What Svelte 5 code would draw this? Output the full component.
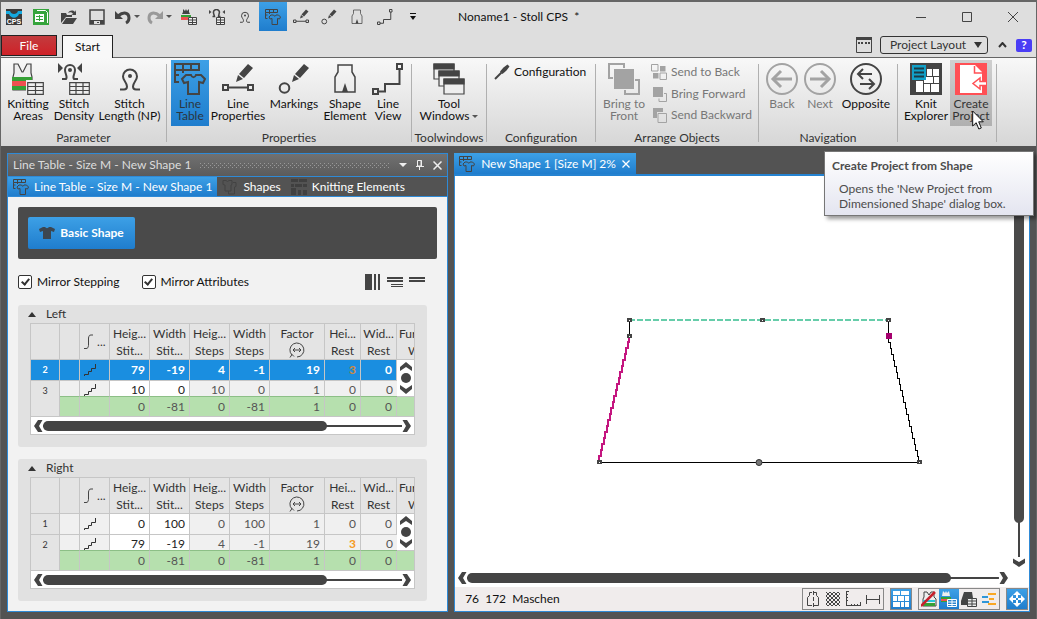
<script lang="ts">
  type Cell = { v: string; tone?: 'edit' | 'warn' };
  interface Row { nr: string; selected?: boolean; cells: Cell[] }
  interface Side { title: string; rows: Row[] }

  const quickTools = ['areas', 'density', 'loop', 'table', 'lineprops', 'marking', 'element', 'lineview'];
  const quickNames = ['Knitting Areas', 'Stitch Density', 'Stitch Length', 'Line Table', 'Line Properties', 'Markings', 'Shape Element', 'Line View'];

  const columns = [
    ['Heig...', 'Stit...'],
    ['Width', 'Stit...'],
    ['Heig...', 'Steps'],
    ['Width', 'Steps'],
    ['Factor', ''],
    ['Hei...', 'Rest'],
    ['Wid...', 'Rest']
  ];

  const totals = ['0', '-81', '0', '-81', '1', '0', '0'];

  function cells(values: string[], warn = false): Cell[] {
    return values.map((v, i) => ({ v, tone: i < 2 ? 'edit' : warn && i === 5 ? 'warn' : undefined }));
  }

  const sides: Side[] = [
    {
      title: 'Left',
      rows: [
        { nr: '2', selected: true, cells: cells(['79', '-19', '4', '-1', '19', '3', '0'], true) },
        { nr: '3', cells: cells(['10', '0', '10', '0', '1', '0', '0']) }
      ]
    },
    {
      title: 'Right',
      rows: [
        { nr: '1', cells: cells(['0', '100', '0', '100', '1', '0', '0']) },
        { nr: '2', cells: cells(['79', '-19', '4', '-1', '19', '3', '0'], true) }
      ]
    }
  ];

  let open = $state([true, true]);
  let mirrorStepping = $state(true);
  let mirrorAttributes = $state(true);

  // one stair per stitch the edge moves sideways
  function stairs(x: number, y: number, dx: number, dy: number, count: number) {
    let d = `M${x} ${y}`;
    for (let i = 1; i <= count; i++) {
      d += `V${Math.round(y + (dy * i) / count)}`;
      if (i < count) d += `H${x + Math.round((dx * i) / (count - 1))}`;
    }
    return d;
  }

  const leftEdge = stairs(174, 160, -30, 126, 21);
  const rightEdge = stairs(433, 160, 30, 126, 21);
</script>

{#snippet icon(name: string, size = 32)}
  <svg class="icon" width={size} height={size} viewBox="0 0 32 32" fill="none" stroke="currentColor" stroke-width={size < 20 ? 2.4 : 1.6} aria-hidden="true">
    {#if name === 'areas'}
      <path d="M1 27V14l1-4V1h4l4 8h1l4-8h4v9l1 4v13z" fill="#eee" stroke-width="1.2" />
      <path d="M0 14h20v13H0z" fill="#35a035" stroke="none" />
      <path d="M0 18h20v5H0z" fill="#f05050" stroke="none" />
      <path d="M14 17h18v15H14z" fill="#eee" stroke="none" />
      <path d="M15.700 19.700h15.600v11.600H15.700zM15.700 23.500h15.600M15.700 27.500h15.600M23.500 19.700v11.600" stroke-width="1.2" />
    {:else if name === 'density'}
      <path d="M0 0v10l5-5zM24 0v10l-5-5z" fill="currentColor" stroke="none" />
      <path d="M4 16h4c2-2-1-5-1-9a5 5 0 0 1 10 0c0 4-3 7-1 9h4" stroke-width="2" />
      <circle cx="12" cy="7" r="2" fill="currentColor" stroke="none" />
      <path d="M11.700 19.700h19.600v11.600H11.700zM11.700 23.500h19.600M11.700 27.500h19.600M18 19.700v11.600M25 19.700v11.600" fill="#eee" stroke-width="1.2" />
    {:else if name === 'loop'}
      <path d="M6 26.500h4c2 0 3-1 3-3 0-4-4-6-4-10a7 7 0 0 1 14 0c0 4-4 6-4 10 0 2 1 3 3 3h4" stroke-width="2" />
      <circle cx="16" cy="13" r="2" fill="currentColor" stroke="none" />
    {:else if name === 'table'}
      <path d="M1 1h24v6H1zM9 1v6M17 1v6M5 12H1v7h4M1 7v5M9 7v3" stroke-width="2" />
      <path d="M12 12h5c1 3 4 3 5 0h5l4 4-2 4-4-1v12H14V19l-4 1-2-4z" stroke-width="2" />
    {:else if name === 'lineprops'}
      <path d="M1 22h5v5H1zM26 22h5v5h-5zM6 24.500h20" stroke-width="2" />
      <path d="M14 19l2-7 5 4zM17 11L26 1l5 4-9 10z" fill="currentColor" stroke="none" />
    {:else if name === 'marking'}
      <circle cx="6.500" cy="25" r="4.800" stroke-width="2" />
      <path d="M14 19l2-7 5 4zM17 11L26 1l5 4-9 10z" fill="currentColor" stroke="none" />
    {:else if name === 'element'}
      <path d="M9 2h14v7l3 5v15H6V14l3-5z" stroke-width="1.500" />
      <path d="M13 29l3-9 3 9z" fill="currentColor" stroke="none" />
    {:else if name === 'lineview'}
      <path d="M1 26h5v5H1zM25 1h5v5h-5zM6 28.500h7V21h14.500V6" stroke-width="2" />
    {:else if name === 'windows'}
      <g fill="#eee" stroke-width="1.200">
        <path d="M1 1h20v15H1z" /><path d="M1 1h20v5H1z" fill="currentColor" />
        <path d="M6 8h20v15H6z" /><path d="M6 8h20v5H6z" fill="currentColor" />
        <path d="M11 16h20v15H11z" /><path d="M11 16h20v5H11z" fill="currentColor" />
      </g>
    {:else if name === 'config'}
      <path d="M2 30L15 17" stroke-width="4" />
      <path d="M12 15l5 5 8-7 6-8-4-4-8 6z" fill="currentColor" stroke="none" />
    {:else if name === 'front'}
      <path d="M6 6h20v20H6z" fill="currentColor" stroke="none" />
      <path d="M5 15H1V1h15v4M27 17h4v14H17v-4" stroke-width="2" />
    {:else if name === 'toback'}
      <path d="M1 1h13v13H1zM18 18h13v13H18z" stroke-width="2" />
      <path d="M18 4h11v11H18zM4 18h11v11H4z" fill="currentColor" stroke="none" />
    {:else if name === 'forward'}
      <path d="M4 2h20v20H4z" fill="currentColor" stroke="none" />
      <path d="M26 15h5v16H16v-6" stroke-width="2" />
    {:else if name === 'backward'}
      <path d="M4 2h20v8H12v12H4z" fill="currentColor" stroke="none" />
      <path d="M14 13h17v18H14z" stroke-width="2" />
    {:else if name === 'back'}
      <circle cx="16" cy="16" r="15" stroke-width="2" />
      <path d="M26 16H8" stroke-width="3" /><path d="M15 8l-8 8 8 8" stroke-width="3" />
    {:else if name === 'next'}
      <circle cx="16" cy="16" r="15" stroke-width="2" />
      <path d="M6 16h18" stroke-width="3" /><path d="M17 8l8 8-8 8" stroke-width="3" />
    {:else if name === 'opposite'}
      <circle cx="16" cy="16" r="15" stroke-width="2" />
      <path d="M22 11H8M13 6l-5 5 5 5M10 21h14M19 16l5 5-5 5" stroke-width="2" />
    {:else if name === 'explorer'}
      <path d="M0 0h32v32H0z" fill="currentColor" stroke="none" />
      <path d="M17 6h5v7h-5zM23 6h6v7h-6zM6 18h7v11H6zM14 14h9v6h-9zM24 14h5v6h-5zM14 21h6v8h-6zM21 21h8v8h-8z" fill="#fff" stroke="none" />
      <path d="M2 2h14v15H2z" fill="#11a0c8" stroke="none" />
      <path d="M4 5.500h10M4 9.500h10M4 13.500h10" stroke="#1c3a44" stroke-width="2" />
    {:else if name === 'create'}
      <path d="M0 0h32v32H0z" fill="#ff5055" stroke="none" />
      <path d="M5 2h15l7 7v21H5z" fill="#fff" stroke="none" />
      <path d="M19.500 3v7H27" stroke="#ff5055" stroke-width="1.500" />
      <path d="M31 18.500h-6V15l-7 5.500 7 5.500v-3.500h6" fill="#fff" stroke="#ff5055" stroke-width="1.500" />
    {/if}
  </svg>
{/snippet}

{#snippet big(name: string, first: string, second: string, width: string, disabled = false)}
  <button type="button" class="big {width}" class:active={name === 'table'} class:hovered={name === 'create'} {disabled}>
    {@render icon(name)}
    <span>{first}<br />{second}{#if name === 'windows'}<i class="caret"></i>{/if}</span>
    {#if name === 'create'}
      <svg class="pointer" width="12" height="20" viewBox="0 0 12 20" aria-hidden="true">
        <path d="M.7 1v15l3.500-3.300 2.600 6.300 2.500-1-2.600-6.200h4.600z" fill="#fff" stroke="#111" />
      </svg>
    {/if}
  </button>
{/snippet}

{#snippet chevron(dir: string)}
  <svg class="chevron {dir}" width="10" height="12" viewBox="0 0 10 12" aria-hidden="true">
    <path d="M5 0h4.500L6 6l3.500 6H5L1 6z" fill="#444" />
  </svg>
{/snippet}

{#snippet hscroll(kind: string)}
  <div class="hscroll {kind}">
    {@render chevron('left')}
    <div class="track"><div class="thumb"></div></div>
    {@render chevron('right')}
  </div>
{/snippet}

<div class="window">
  <header class="titlebar">
    <div class="quick">
      <button type="button" class="app-button" aria-label="CPS">
        <svg width="16" height="16" viewBox="0 0 16 16">
          <path d="M0 0h16v16H0z" fill="#3b3b3b" />
          <path d="M0 2h4c1 4 7 4 8 0h4v3h-3c-2 5-8 5-10 0H0z" fill="#14a9e0" />
          <text x="8" y="15" text-anchor="middle" class="logo-text">CPS</text>
        </svg>
      </button>
      <button type="button" aria-label="New">
        <svg width="16" height="16" viewBox="0 0 16 16">
          <path d="M0 0h16v16H0z" fill="#35a43c" />
          <path d="M4 1.500h8.500l2 2V14" fill="none" stroke="#fff" />
          <path d="M2 5h9v8H2z" fill="#fff" />
          <path d="M3 7.500h7M3 10.500h7M6.500 6v6" stroke="#35a43c" />
        </svg>
      </button>
      <button type="button" aria-label="Open">
        <svg width="16" height="16" viewBox="0 0 16 16" fill="#444">
          <path d="M0 14V4h5l1 2h5v2H5zM5 9h11l-4 6H1z" />
          <path d="M7 4c2-3 5-3 7-1l1-2v5h-5l2-1c-1-2-3-2-5-1z" />
        </svg>
      </button>
      <button type="button" aria-label="Save">
        <svg width="16" height="16" viewBox="0 0 16 16" fill="none" stroke="#444">
          <path d="M1 1h14v14H1z" stroke-width="1.500" /><path d="M1 11h14v4H1z" fill="#444" stroke="none" /><path d="M5 12h6v3H5z" fill="#ddd" stroke="none" /><path d="M8 13h2v1H8z" fill="#444" stroke="none" />
        </svg>
      </button>
      <button type="button" class="split" aria-label="Undo">
        <svg width="16" height="16" viewBox="0 0 16 16" fill="none" stroke="#444" stroke-width="3"><path d="M3 7c6-5 11-3 11 2 0 3-1 4-3 5" /><path d="M0 2v8h8z" fill="#444" stroke="none" /></svg>
        <i class="caret"></i>
      </button>
      <button type="button" class="split" aria-label="Redo">
        <svg width="16" height="16" viewBox="0 0 16 16" fill="none" stroke="#999" stroke-width="3"><path d="M13 7C7 2 2 4 2 9c0 3 1 4 3 5" /><path d="M16 2v8H8z" fill="#999" stroke="none" /></svg>
        <i class="caret"></i>
      </button>
      {#each quickTools as tool, i}
        <button type="button" class:active={tool === 'table'} aria-label={quickNames[i]}>
          {#if tool === 'areas'}
            <svg width="16" height="16" viewBox="0 0 16 16">
              <path d="M1 5l1-2V0l2 2 1-2 1 2 2-2v3l1 2z" fill="#444" />
              <path d="M0 6h10v2H0z" fill="#35a035" /><path d="M0 8h7v3H0z" fill="#f05050" />
              <path d="M7.500 8.500h8v7h-8zM7.500 11h8M7.500 13.500h8M11.500 8.500v7" fill="#eee" stroke="#444" />
            </svg>
          {:else if tool === 'density'}
            <svg width="16" height="16" viewBox="0 0 16 16" fill="none" stroke="#444">
              <path d="M0 1v4l2.500-2zM16 1v4l-2.500-2z" fill="#444" stroke="none" />
              <path d="M3.500 7.500h2L4.500 4a3 3 0 0 1 6-1l-1 4.500h2" stroke-width="1.500" />
              <path d="M7.500 8.500h8v7h-8zM7.500 11h8M7.500 13.500h8M11.500 8.500v7" fill="#eee" />
            </svg>
          {:else}
            {@render icon(tool, 16)}
          {/if}
        </button>
      {/each}
      <button type="button" aria-label="Customize">
        <svg width="8" height="8" viewBox="0 0 8 8"><path d="M1 0h6v1H1zM1 3h6L4 7z" fill="#111" /></svg>
      </button>
    </div>
    <h1>Noname1 - Stoll CPS &nbsp;*</h1>
    <div class="window-buttons">
      <button type="button" aria-label="Minimize"><svg width="10" height="10" viewBox="0 0 10 10"><path d="M0 5.500h10" stroke="#444" /></svg></button>
      <button type="button" aria-label="Maximize"><svg width="10" height="10" viewBox="0 0 10 10"><path d="M.5.5h9v9h-9z" fill="none" stroke="#444" /></svg></button>
      <button type="button" aria-label="Close"><svg width="12" height="12" viewBox="0 0 12 12"><path d="M1 1l10 10M11 1L1 11" stroke="#444" /></svg></button>
    </div>
  </header>

  <nav class="ribbon-tabs">
    <button type="button" class="file">File</button>
    <button type="button" class="start">Start</button>
    <div class="ribbon-tools">
      <svg width="16" height="16" viewBox="0 0 16 16"><path d="M.5.5h15v15H.5z" fill="none" stroke="#444" /><path d="M0 0h16v3H0zM2 5h2v2H2zM5 5h2v2H5zM9 5h2v2H9zM12 5h2v2h-2z" fill="#444" /></svg>
      <select aria-label="Layout"><option>Project Layout</option></select>
      <button type="button" aria-label="Collapse ribbon"><svg width="9" height="6" viewBox="0 0 9 6"><path d="M1 5l3.500-4L8 5" fill="none" stroke="#333" stroke-width="2" /></svg></button>
      <button type="button" class="help" aria-label="Help">?</button>
    </div>
  </nav>

  <section class="ribbon">
    <div class="group">
      <div class="items">
        {@render big('areas', 'Knitting', 'Areas', 'w46')}
        {@render big('density', 'Stitch', 'Density', 'w46')}
        {@render big('loop', 'Stitch', 'Length (NP)', 'w65')}
      </div>
      <h2>Parameter</h2>
    </div>
    <div class="group">
      <div class="items">
        {@render big('table', 'Line', 'Table', 'w38')}
        {@render big('lineprops', 'Line', 'Properties', 'w58')}
        {@render big('marking', 'Markings', '', 'w54')}
        {@render big('element', 'Shape', 'Element', 'w48')}
        {@render big('lineview', 'Line', 'View', 'w38')}
      </div>
      <h2>Properties</h2>
    </div>
    <div class="group">
      <div class="items">{@render big('windows', 'Tool', 'Windows', 'w66')}</div>
      <h2>Toolwindows</h2>
    </div>
    <div class="group">
      <div class="items">
        <div class="stack wide">
          <button type="button">{@render icon('config', 16)}Configuration</button>
        </div>
      </div>
      <h2>Configuration</h2>
    </div>
    <div class="group">
      <div class="items">
        {@render big('front', 'Bring to', 'Front', 'w48', true)}
        <div class="stack">
          <button type="button" disabled>{@render icon('toback', 16)}Send to Back</button>
          <button type="button" disabled>{@render icon('forward', 16)}Bring Forward</button>
          <button type="button" disabled>{@render icon('backward', 16)}Send Backward</button>
        </div>
      </div>
      <h2>Arrange Objects</h2>
    </div>
    <div class="group">
      <div class="items">
        {@render big('back', 'Back', '', 'w38', true)}
        {@render big('next', 'Next', '', 'w38', true)}
        {@render big('opposite', 'Opposite', '', 'w54')}
      </div>
      <h2>Navigation</h2>
    </div>
    <div class="group">
      <div class="items">
        {@render big('explorer', 'Knit', 'Explorer', 'w48')}
        {@render big('create', 'Create', 'Project', 'w42')}
      </div>
    </div>
  </section>

  <main>
    <section class="tool-panel">
      <header class="panel-title">
        <span>Line Table - Size M - New Shape 1</span>
        <span class="grip"></span>
        <button type="button" aria-label="Menu"><svg width="8" height="5" viewBox="0 0 8 5"><path d="M0 0h8L4 4z" fill="#eee" /></svg></button>
        <button type="button" aria-label="Pin"><svg width="8" height="10" viewBox="0 0 8 10"><path d="M1.500.5h4V6h-4zM5 0v6M0 6.500h8M3.500 6v4" fill="none" stroke="#eee" /></svg></button>
        <button type="button" aria-label="Close"><svg width="9" height="9" viewBox="0 0 9 9"><path d="M.5.5l8 8M8.500.5l-8 8" stroke="#eee" stroke-width="1.500" /></svg></button>
      </header>
      <div class="panel-tabs" role="tablist">
        <button type="button" class="active" role="tab" aria-selected="true">{@render icon('table', 16)}Line Table - Size M - New Shape 1</button>
        <button type="button" role="tab" aria-selected="false">
          <svg width="16" height="16" viewBox="0 0 16 16" fill="none" stroke="#434343"><path d="M1 1.500h3l1.500 1 1.500-1h3v4l-1 .5v6H3V6l-2-.5zM11 3.500h3v4l-1.500.5v7h-6v-3" /></svg>Shapes
        </button>
        <button type="button" role="tab" aria-selected="false">
          <svg width="16" height="16" viewBox="0 0 16 16" fill="#404040"><path d="M0 0h7v3H0zM8 0h8v3H8zM0 5h3v3H0zM4 5h7v3H4zM12 5h4v3h-4zM0 9h5v7H0zM7 11h3v5H7zM12 11h4v5h-4z" /></svg>Knitting Elements
        </button>
      </div>

      <div class="panel-body">
        <div class="shape-bar">
          <button type="button">
            <svg width="16" height="14" viewBox="0 0 16 14"><path d="M4 1h2c1 1.500 3 1.500 4 0h2l4 2-1 3-3-1v8H4V5L1 6 0 3z" fill="#3c4650" /></svg>
            Basic Shape
          </button>
        </div>

        <div class="options">
          <label><input type="checkbox" bind:checked={mirrorStepping} />Mirror Stepping</label>
          <label><input type="checkbox" bind:checked={mirrorAttributes} />Mirror Attributes</label>
          <div class="view-icons">
            <svg width="16" height="16" viewBox="0 0 16 16"><path d="M0 0h7v16H0zM9 0h2v16H9zM13 0h2v16h-2z" fill="#444" /></svg>
            <svg width="16" height="16" viewBox="0 0 16 16"><path d="M0 3h16v2H0zM0 6h16v2H0zM4 10h12v1H4zM4 12h12v1H4z" fill="#444" /></svg>
            <svg width="16" height="16" viewBox="0 0 16 16"><path d="M0 3h16v2H0zM0 6h16v2H0z" fill="#444" /></svg>
          </div>
        </div>

        {#each sides as side, s}
          <section class="side">
            <button type="button" class="expander" aria-expanded={open[s]} onclick={() => (open[s] = !open[s])}>
              <svg width="8" height="5" viewBox="0 0 8 5"><path d="M0 5h8L4 0z" fill="#333" /></svg>{side.title}
            </button>
            {#if open[s]}
              <div class="grid">
                <table>
                  <colgroup>
                    <col class="c-nr" /><col class="c-mark" /><col class="c-type" />
                    <col class="c-num" /><col class="c-num" /><col class="c-num" /><col class="c-num" />
                    <col class="c-factor" /><col class="c-rest" /><col class="c-rest" /><col />
                  </colgroup>
                  <thead>
                    <tr>
                      <th></th>
                      <th></th>
                      <th class="type">
                        <svg width="10" height="16" viewBox="0 0 10 16"><path d="M0 14.500h2c2 0 2-1 2.500-3V4C5 2 5 1 7 1h2" fill="none" stroke="#444" /></svg>
                        <span>...</span>
                      </th>
                      {#each columns as [top, bottom]}
                        <th>
                          {top}<br />
                          {#if bottom}{bottom}{:else}
                            <svg class="factor" width="16" height="16" viewBox="0 0 16 16" fill="none" stroke="#444"><path d="M3 13A7 7 0 1 1 8 15M1 15.500l2-3 2 2M4 8h8M6 6L4 8l2 2M10 6l2 2-2 2" /></svg>
                          {/if}
                        </th>
                      {/each}
                      <th class="cut">Fur<br /><span>W</span></th>
                    </tr>
                  </thead>
                  <tbody>
                    {#each side.rows as row, r}
                      <tr class:selected={row.selected} class:partial={r === 1}>
                        <td class="nr" rowspan={r === 1 ? 2 : 1}>{row.nr}</td>
                        <td></td>
                        <td class="type"><svg width="12" height="12" viewBox="0 0 12 12"><path d="M.5 12v-1.500h4v-3h3v-3h4V0" fill="none" stroke="#333" /></svg></td>
                        {#each row.cells as cell}
                          <td class={cell.tone}>{cell.v}</td>
                        {/each}
                        {#if r === 0}
                          <td class="vbar" rowspan="2">
                            <svg width="14" height="34" viewBox="0 0 14 34" fill="#444"><path d="M7 1l6 5v4L7 6l-6 4V6z" /><circle cx="7" cy="17" r="5" /><path d="M7 33l6-5v-4l-6 4-6-4v4z" /></svg>
                          </td>
                        {/if}
                      </tr>
                    {/each}
                    <tr class="total">
                      <td></td>
                      <td></td>
                      {#each totals as total}
                        <td>{total}</td>
                      {/each}
                      <td></td>
                    </tr>
                  </tbody>
                </table>
                {@render hscroll('small')}
              </div>
            {/if}
          </section>
        {/each}
      </div>
    </section>

    <section class="document">
      <div class="doc-tabs" role="tablist">
        <button type="button" role="tab" aria-selected="true">
          {@render icon('table', 16)}New Shape 1 [Size M] 2%
          <svg width="8" height="8" viewBox="0 0 8 8"><path d="M.5.5l7 7M7.500.5l-7 7" stroke="#fff" stroke-width="1.300" /></svg>
        </button>
      </div>
      <div class="doc-body">
        <div class="canvas-row">
          <svg class="canvas" shape-rendering="crispEdges">
            <g fill="none" stroke="#000">
              <path d="M174.500 144v16M433.500 144v16M144 286.500h320" />
              <path d={rightEdge} transform="translate(.5 .5)" />
              <path d={leftEdge} stroke="#c4157f" stroke-width="2" />
              <path d="M174 144h260" stroke="#66cdaa" stroke-width="2" stroke-dasharray="6 2" />
            </g>
            {#each [[174, 144], [307, 144], [433, 144], [174, 160], [144, 286], [464, 286]] as [x, y]}
              <rect x={x - 2} y={y - 2} width="5" height="4" fill="#444" />
              <rect {x} {y} width="1" height="1" fill="#fff" />
            {/each}
            <rect x="431" y="157" width="6" height="6" fill="#a5006e" />
            <circle cx="304" cy="286.500" r="3" fill="#777" stroke="#333" shape-rendering="auto" />
          </svg>
          <div class="vscroll">
            <div class="track"><div class="thumb"></div></div>
            {@render chevron('down')}
          </div>
        </div>
        {@render hscroll('large')}
        <footer>
          <span>76&nbsp; 172&nbsp; Maschen</span>
          <div class="tools">
            <button type="button" aria-label="Symmetry"><svg width="16" height="16" viewBox="0 0 16 16" fill="none" stroke="#444"><path d="M7 1.500H4.500v3l-2 2v8H7M9 1.500h2.500v3l2 2v8H9M8.500 0v4M8.500 6v4M8.500 12v4" /></svg></button>
            <button type="button" aria-label="Grid">
              <svg width="16" height="16" viewBox="0 0 16 16">
                <defs><pattern id="checks" width="4" height="4" patternUnits="userSpaceOnUse"><path d="M0 0h2v2H0zM2 2h2v2H2z" fill="#444" /></pattern></defs>
                <path d="M1 1h14v14H1z" fill="url(#checks)" />
              </svg>
            </button>
            <button type="button" aria-label="Ruler"><svg width="16" height="16" viewBox="0 0 16 16" fill="none" stroke="#444"><path d="M1.500 0v14.500M1 .5h3M1 3.500h2M1 6.500h2M1 9.500h2M1 14.500h15M15.500 11v4M12.500 13v2M9.500 13v2M6.500 13v2" /></svg></button>
            <button type="button" aria-label="Distance"><svg width="16" height="16" viewBox="0 0 16 16" fill="none" stroke="#444"><path d="M1.500 4v9M14.500 4v9M1 8.500h14" /></svg></button>
          </div>
          <div class="tools">
            <button type="button" class="active" aria-label="Arrange windows"><svg width="16" height="16" viewBox="0 0 16 16" fill="#fff"><path d="M0 0h7v4H0zM8 0h8v4H8zM0 5h4v5H0zM5 5h6v5H5zM12 5h4v5h-4zM0 11h7v5H0zM8 11h3v5H8zM12 11h4v5h-4z" /></svg></button>
          </div>
          <div class="tools">
            <button type="button" aria-label="Hide areas"><svg width="16" height="16" viewBox="0 0 16 16"><path d="M3 1h3l2 3 2-3h3v5l2 2v7H2V8l1-2z" fill="#eee" stroke="#444" /><path d="M2 9h12v2H2z" fill="#25c6da" /><path d="M2 12h12v3H2z" fill="#35a035" /><path d="M0 15L14 1" stroke="#c8202c" stroke-width="2.500" /></svg></button>
            <button type="button" class="active" aria-label="Area table"><svg width="16" height="16" viewBox="0 0 16 16"><path d="M2 0l2 2 1-2 1 2 2-2 1 5H1z" fill="#eee" /><path d="M0 6h10v5H0z" fill="#35a035" /><path d="M0 8h6v2H0z" fill="#f05050" /><path d="M6.500 8.500h9v7h-9zM6.500 11h9M6.500 13.500h9M11 8.500v7" fill="#2b83cc" stroke="#fff" /></svg></button>
            <button type="button" aria-label="Weight table"><svg width="16" height="16" viewBox="0 0 16 16"><path d="M3 1h8l1 6v7H0v-4z" fill="#444" /><path d="M6.500 7.500h9v8h-9zM6.500 10h9M6.500 13h9M11 7.500v8" fill="#eee" stroke="#444" /></svg></button>
            <button type="button" aria-label="Alignment"><svg width="16" height="16" viewBox="0 0 16 16" fill="none" stroke-width="2"><path d="M7 3h8M8 8h5M7 13h8" stroke="#f9a825" /><path d="M1 6h6M1 11h7" stroke="#2f96d8" /></svg></button>
          </div>
          <div class="tools">
            <button type="button" class="active" aria-label="Fit to window"><svg width="18" height="18" viewBox="0 0 18 18" fill="#fff"><path d="M9 1l4 4h-3v3H8V5H5zM9 17l4-4h-3v-3H8v3H5zM1 9l4-4v3h3v2H5v3zM17 9l-4-4v3h-3v2h3v3z" /></svg></button>
          </div>
        </footer>
      </div>
    </section>
  </main>

  <div class="tooltip" role="tooltip">
    <strong>Create Project from Shape</strong>
    <p>Opens the 'New Project from<br />Dimensioned Shape' dialog box.</p>
  </div>
</div>

<style>
  :global(body) {
    background: #535353;
  }

  .window {
    --ink: #444;
    --blue: linear-gradient(#3da0e6, #1f7dcd);
    position: relative;
    min-height: 100vh;
    box-sizing: border-box;
    display: flex;
    flex-direction: column;
    border: 1px solid #666;
    border-top-width: 2px;
    background: #535353;
    color: #111;
    font: 12px/16px Lato, 'Noto Sans', sans-serif;
  }

  button {
    margin: 0;
    padding: 0;
    border: 0;
    background: none;
    color: inherit;
    font: inherit;
    display: flex;
    align-items: center;
    justify-content: center;
  }

  svg {
    flex: none;
  }

  h1,
  h2,
  p {
    margin: 0;
    font: inherit;
  }

  .icon {
    color: var(--ink);
  }

  button:disabled {
    color: #777;
  }

  button:disabled .icon {
    color: #a3a3a3;
  }

  .caret {
    display: inline-block;
    border: 3px solid transparent;
    border-top-color: #555;
    border-bottom: 0;
    vertical-align: middle;
    margin-left: 3px;
  }

  .titlebar {
    display: flex;
    align-items: center;
    height: 29px;
    background: #dedede;
  }

  .quick {
    display: flex;
    height: 100%;
  }

  .quick button {
    width: 28px;
  }

  .quick .app-button {
    width: 26px;
  }

  .quick .split {
    width: 32px;
  }

  .quick .active {
    background: var(--blue);
  }

  .logo-text {
    font: bold 7px 'Liberation Sans', sans-serif;
    fill: #fff;
  }

  h1 {
    flex: 1;
    padding-left: 31px;
  }

  .window-buttons {
    display: flex;
  }

  .window-buttons button {
    width: 46px;
    height: 28px;
  }

  .ribbon-tabs {
    display: flex;
    align-items: flex-end;
    height: 26px;
    background: #dedede;
    border-bottom: 1px solid #666;
  }

  .file,
  .start {
    box-sizing: border-box;
    border: 1px solid #222;
  }

  .file {
    width: 56px;
    height: 21px;
    margin-bottom: 1px;
    background: linear-gradient(#c23b3e, #cf2228);
    color: #fff;
  }

  .start {
    width: 51px;
    height: 23px;
    margin: 0 0 -1px 5px;
    border-bottom: 0;
    background: #f8f8f8;
  }

  .ribbon-tools {
    display: flex;
    align-items: center;
    gap: 8px;
    height: 24px;
    margin-left: auto;
    padding-right: 4px;
  }

  select {
    appearance: none;
    box-sizing: border-box;
    width: 108px;
    height: 18px;
    padding: 0 9px;
    border: 1px solid #333;
    border-radius: 3px;
    background: url("data:image/svg+xml,%3Csvg xmlns='http://www.w3.org/2000/svg' width='8' height='6'%3E%3Cpath d='M0 0h8L4 6z' fill='%23333'/%3E%3C/svg%3E") no-repeat right 5px center;
    color: #333;
    font: inherit;
  }

  .ribbon-tools button {
    width: 12px;
  }

  .ribbon-tools .help {
    width: 16px;
    height: 13px;
    border-radius: 2px;
    background: #4a3df5;
    color: #fff;
    font-weight: bold;
  }

  .ribbon {
    display: flex;
    height: 88px;
    background: linear-gradient(#f8f8f8, #d6d6d6);
  }

  .group {
    box-sizing: border-box;
    height: 78px;
    margin-top: 6px;
    padding: 0 4px;
    display: flex;
    flex-direction: column;
    border-right: 1px solid #b0b0b0;
  }

  .items {
    display: flex;
    height: 66px;
    margin-top: -4px;
    flex: none;
  }

  h2 {
    margin: 4px -4px 0;
    color: #333;
    text-align: center;
  }

  .big {
    position: relative;
    flex-direction: column;
    justify-content: flex-start;
    gap: 3px;
    padding-top: 3px;
    line-height: 12px;
    white-space: nowrap;
  }

  .w38 { width: 38px; }
  .w42 { width: 42px; }
  .w46 { width: 46px; }
  .w48 { width: 48px; }
  .w54 { width: 54px; }
  .w58 { width: 58px; }
  .w65 { width: 65px; }
  .w66 { width: 66px; }

  .big.active {
    background: var(--blue);
    color: #2b3640;
  }

  .big.hovered {
    background: linear-gradient(#d0d0d0, #b0b0b0);
    color: #333;
  }

  .pointer {
    position: absolute;
    left: 22px;
    top: 50px;
  }

  .stack {
    display: flex;
    flex-direction: column;
    align-items: flex-start;
    width: 106px;
    padding: 1px 0 0 3px;
    box-sizing: border-box;
  }

  .stack.wide {
    width: 100px;
  }

  .stack button {
    height: 22px;
    gap: 4px;
    white-space: nowrap;
  }

  main {
    flex: 1;
    display: flex;
    gap: 6px;
    padding: 7px 6px;
  }

  .tool-panel {
    flex: 440 1 0;
    min-width: 0;
    box-sizing: border-box;
    display: flex;
    flex-direction: column;
    border: 1px solid #2f8ad6;
  }

  .panel-title {
    display: flex;
    align-items: center;
    gap: 9px;
    height: 22px;
    padding: 0 5px;
    background: linear-gradient(#717171, #5b5b5b);
    border-bottom: 1px solid #2f8ad6;
    color: #ddd;
    white-space: nowrap;
  }

  .grip {
    flex: 1;
    height: 5px;
    background:
      repeating-linear-gradient(90deg, #999 0 1px, transparent 1px 4px) 0 0 / 100% 1px no-repeat,
      repeating-linear-gradient(90deg, #999 0 1px, transparent 1px 4px) 2px 2px / 100% 1px no-repeat,
      repeating-linear-gradient(90deg, #999 0 1px, transparent 1px 4px) 0 4px / 100% 1px no-repeat;
  }

  .panel-tabs {
    display: flex;
    height: 19px;
    border-bottom: 1px solid #2f8ad6;
    color: #fff;
    white-space: nowrap;
  }

  .panel-tabs button {
    gap: 5px;
    padding: 0 5px;
  }

  .panel-tabs .active,
  .doc-tabs button {
    background: var(--blue);
  }

  .panel-body {
    flex: 1;
    padding: 10px;
    background: #f2f2f2;
    display: flex;
    flex-direction: column;
  }

  .shape-bar {
    padding: 10px;
    border-radius: 2px;
    background: #4a4a4a;
  }

  .shape-bar button {
    gap: 5px;
    width: 107px;
    height: 32px;
    border-radius: 2px;
    background: var(--blue);
    color: #fff;
    font-weight: bold;
  }

  .options {
    display: flex;
    align-items: center;
    gap: 22px;
    height: 46px;
    padding-right: 12px;
  }

  .options label {
    display: flex;
    align-items: center;
    gap: 5px;
  }

  input[type='checkbox'] {
    appearance: none;
    box-sizing: border-box;
    width: 14px;
    height: 14px;
    margin: 0;
    display: grid;
    place-items: center;
    border: 1px solid #333;
    border-radius: 2px;
    background: #fff;
  }

  input[type='checkbox']:checked::before {
    content: '';
    width: 3px;
    height: 6px;
    border: solid #333;
    border-width: 0 2px 2px 0;
    transform: translateY(-1px) rotate(40deg);
  }

  .view-icons {
    display: flex;
    gap: 6px;
    margin-left: auto;
  }

  .side {
    margin: 0 10px 12px 0;
    padding: 0 12px 12px;
    border-radius: 3px;
    background: #e1e1e1;
  }

  .side:last-child {
    margin-bottom: 0;
  }

  .expander {
    gap: 10px;
    height: 18px;
    margin-left: -2px;
    padding-right: 8px;
    color: #333;
  }

  .grid {
    border: 1px solid #c6c6c6;
    overflow: hidden;
    background: #fff;
  }

  table {
    width: 100%;
    table-layout: fixed;
    border-spacing: 0;
    color: #555;
  }

  .c-nr { width: 29px; }
  .c-mark { width: 20px; }
  .c-type { width: 30px; }
  .c-num { width: 40px; }
  .c-factor { width: 55px; }
  .c-rest { width: 36px; }

  th,
  td {
    box-sizing: border-box;
    padding: 0 4px 0 0;
    border: solid #c6c6c6;
    border-width: 0 1px 1px 0;
    overflow: hidden;
    white-space: nowrap;
  }

  th {
    height: 36px;
    padding: 0 1px;
    background: #e4e4e4;
    color: #333;
    font-weight: normal;
    line-height: 17px;
    text-align: center;
  }

  th:last-child,
  td:last-child {
    border-right: 0;
  }

  .factor {
    vertical-align: top;
  }

  .cut {
    text-align: left;
    text-indent: 1px;
  }

  .cut span {
    padding-left: 10px;
  }

  td {
    height: 21px;
    background: #f0f0f0;
    line-height: 20px;
    text-align: right;
  }

  .type {
    padding-left: 4px;
    padding-right: 0;
    text-align: left;
  }

  .type svg {
    vertical-align: middle;
  }

  td.type svg {
    display: block;
  }

  td.nr {
    padding: 0;
    background: #e4e4e4;
    color: #333;
    font-size: 9px;
    text-align: center;
    vertical-align: top;
  }

  .edit {
    background: #fff;
    color: #222;
  }

  .warn {
    color: #f59a1d;
    font-weight: bold;
  }

  .selected td:not(.vbar) {
    background: #1a8ee0;
    color: #fff;
    font-weight: bold;
  }

  .selected td.warn:not(.vbar) {
    color: #d08a40;
  }

  .partial td {
    height: 16px;
    padding-top: 3px;
    line-height: 12px;
    border-bottom-color: #8cbf86;
  }

  .partial td.nr {
    padding-top: 0;
    line-height: 20px;
    border-bottom-color: #c6c6c6;
  }

  td.vbar {
    padding: 0 2px;
    background: #fff;
    text-align: left;
    line-height: 0;
  }

  .total td {
    height: 20px;
    line-height: 19px;
    background: #b6e0ae;
  }

  .hscroll {
    display: flex;
    align-items: center;
    padding: 0 2px;
    background: #fff;
  }

  .small {
    height: 17px;
  }

  .large {
    height: 18px;
    padding-right: 20px;
  }

  .track {
    flex: 1;
    display: flex;
    align-items: center;
    background: linear-gradient(#444, #444) center / 100% 2px no-repeat;
  }

  .hscroll .thumb {
    width: 79%;
    height: 10px;
    border-radius: 5px;
    background: #444;
  }

  .large .thumb {
    width: 91%;
  }

  .right {
    transform: scaleX(-1);
  }

  .down {
    transform: rotate(-90deg);
  }

  .document {
    flex: 577 1 0;
    min-width: 0;
    display: flex;
    flex-direction: column;
  }

  .doc-tabs {
    display: flex;
    height: 21px;
    border-bottom: 2px solid #2583d1;
    color: #fff;
  }

  .doc-tabs button {
    gap: 6px;
    padding: 0 6px 0 5px;
    white-space: nowrap;
  }

  .doc-body {
    flex: 1;
    display: flex;
    flex-direction: column;
    border: solid #2f8ad6;
    border-width: 0 1px 1px;
    background: #fff;
  }

  .canvas-row {
    flex: 1;
    display: flex;
    min-height: 300px;
  }

  .canvas {
    flex: 1;
    min-width: 0;
  }

  .vscroll {
    display: flex;
    flex-direction: column;
    align-items: center;
    width: 20px;
  }

  .vscroll .track {
    width: 10px;
    align-items: flex-start;
    background: linear-gradient(#444, #444) center / 2px 100% no-repeat;
  }

  .vscroll .thumb {
    width: 10px;
    height: 91%;
    border-radius: 0 0 5px 5px;
    background: #4a4a4a;
  }

  footer {
    display: flex;
    align-items: center;
    gap: 6px;
    height: 24px;
    padding-right: 1px;
    background: #f0ecec;
  }

  footer > span {
    flex: 1;
    padding-left: 10px;
  }

  .tools {
    display: flex;
    border: 1px solid #888;
  }

  .tools button {
    width: 20px;
    height: 20px;
  }

  .tools .active {
    background: var(--blue);
  }

  .tooltip {
    position: absolute;
    top: 149px;
    right: 2px;
    width: 210px;
    box-sizing: border-box;
    padding: 6px 7px 4px;
    border: 1px solid #767676;
    background: linear-gradient(#fff, #e4e5f0);
    box-shadow: 3px 3px 4px rgba(0, 0, 0, 0.4);
    color: #4c4c4c;
    line-height: 15px;
  }

  .tooltip p {
    padding: 8px 0 0 7px;
    white-space: nowrap;
  }
</style>
